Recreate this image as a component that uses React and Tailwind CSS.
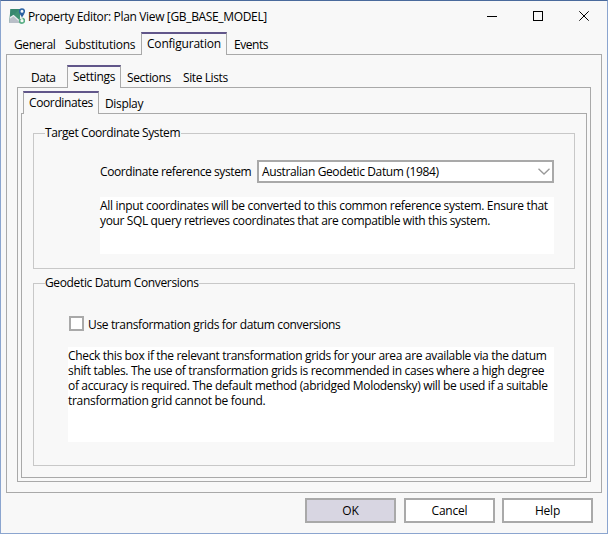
import React, { useState } from 'react';

const MAIN_TABS = [
  { name: 'General', className: 'w-[51px] pl-[8px] tracking-[-0.4px]' },
  { name: 'Substitutions', className: 'w-[84px] pl-[8px] tracking-[-0.25px]' },
  { name: 'Configuration', className: 'w-[86px] pl-[6px] tracking-[-0.2px]' },
  { name: 'Events', className: 'w-[50px] pl-[7px] tracking-[-0.45px]' }
];

const CONFIG_TABS = [
  { name: 'Data', className: 'w-[44px] pl-[8px] tracking-[-0.5px]' },
  { name: 'Settings', className: 'w-[54px] pl-[6px] tracking-[-0.3px]' },
  { name: 'Sections', className: 'w-[56px] pl-[6px] tracking-[-0.35px]' },
  { name: 'Site Lists', className: 'w-[60px] pl-[6px] tracking-[-0.4px]' }
];

const SETTINGS_TABS = [
  { name: 'Coordinates', className: 'w-[76px] pl-[6px] tracking-[-0.38px]' },
  { name: 'Display', className: 'w-[54px] pl-[6px] tracking-[-0.35px]' }
];

function TabBar({ tabs, active, onSelect, className }) {
  return (
    <div role="tablist" className={`relative z-10 flex ${className}`}>
      {tabs.map((tab) => (
        <button
          key={tab.name}
          type="button"
          role="tab"
          aria-selected={tab.name === active}
          onClick={() => onSelect(tab.name)}
          className={`h-[23px] text-left whitespace-nowrap ${tab.className} ${
            tab.name === active
              ? 'border-x border-t-2 border-x-[#a9a9a9] border-t-[#61568a] bg-[#f8f8f8] pb-[2px] -indent-px'
              : 'pt-[1px]'
          }`}
        >
          {tab.name}
        </button>
      ))}
    </div>
  );
}

function AppIcon() {
  return (
    <svg width="16" height="16" viewBox="0 0 16 16">
      <path d="M1.5 1H11V12L13 15H0Z" fill="#3f9173" />
      <path d="M1.5 1H10L4 8L1 9Z" fill="#37876f" />
      <path d="M0.7 9L4 7.5L11 13V15H0Z" fill="#b9bfc8" />
      <path d="M1 10L4.5 7.5L11 13.5" stroke="#e9edf0" strokeWidth="1.2" fill="none" />
      <path d="M10.5 5.5L13 9.5L15.5 5.5Z" fill="#2b5f9e" />
      <circle cx="13" cy="3.3" r="2.3" fill="#f4f8fc" stroke="#2b62a3" strokeWidth="1.6" />
      <circle cx="13" cy="12.7" r="2.4" fill="#f8f8f8" stroke="#58ad83" strokeWidth="1.6" />
      <path d="M11 10.2H13.5" stroke="#f8f8f8" strokeWidth="1.2" />
    </svg>
  );
}

function TitleBar() {
  return (
    <div className="flex h-[30px] items-center pl-2">
      <AppIcon />
      <span className="ml-[3px] flex-1 pt-px tracking-[-0.345px]">Property Editor: Plan View [GB_BASE_MODEL]</span>
      <div className="flex pr-[17px]">
        <button type="button" aria-label="Minimize" className="mr-[35px]">
          <svg width="11" height="11" shapeRendering="crispEdges">
            <path d="M0 5.5H10" stroke="#000" />
          </svg>
        </button>
        <button type="button" aria-label="Maximize" className="mr-[35px]">
          <svg width="11" height="11" shapeRendering="crispEdges">
            <rect x="0.5" y="0.5" width="9" height="9" fill="none" stroke="#000" />
          </svg>
        </button>
        <button type="button" aria-label="Close">
          <svg width="11" height="11">
            <path d="M0.3 0.3L9.7 9.7M9.7 0.3L0.3 9.7" stroke="#000" />
          </svg>
        </button>
      </div>
    </div>
  );
}

function Group({ title, titleClass, className, children }) {
  return (
    <section className={`border border-[#c8c8c8] ${className}`}>
      <h2 className={`-mt-[9px] ml-[11px] h-[16px] bg-[#f8f8f8] leading-[16px] whitespace-nowrap ${titleClass}`}>
        {title}
      </h2>
      {children}
    </section>
  );
}

function DialogButton({ children, className }) {
  return (
    <button type="button" className={`h-[25px] w-[91px] border-2 border-[#a9a9a9] tracking-[-0.2px] ${className}`}>
      {children}
    </button>
  );
}

function App() {
  const [mainTab, setMainTab] = useState('Configuration');
  const [configTab, setConfigTab] = useState('Settings');
  const [settingsTab, setSettingsTab] = useState('Coordinates');
  const [useGrids, setUseGrids] = useState(false);

  return (
    <div className="h-[534px] w-[608px] overflow-hidden border border-[#8ba5cf] border-t-[#4a6a9c] bg-[#f8f8f8] font-['Open_Sans',sans-serif] text-[12px] leading-[15px] text-black">
      <TitleBar />

      <TabBar tabs={MAIN_TABS} active={mainTab} onSelect={setMainTab} className="mt-px ml-[5px]" />
      <div className="-mt-px ml-[5px] h-[439px] w-[596px] border border-[#a9a9a9] px-[10px] pt-[10px]">
        <TabBar tabs={CONFIG_TABS} active={configTab} onSelect={setConfigTab} className="ml-[6px]" />
        <div className="-mt-px h-[395px] w-[574px] border border-[#a9a9a9] px-[3px] pt-[3px]">
          <TabBar tabs={SETTINGS_TABS} active={settingsTab} onSelect={setSettingsTab} className="ml-[2px]" />
          <div className="-mt-px h-[365px] w-[566px] border border-[#a9a9a9] pt-[19px] pl-[11px]">
            <Group title="Target Coordinate System" titleClass="w-[136px] tracking-[-0.4px]" className="h-[136px] w-[542px]">
              <div className="mt-[19px] ml-[66px] flex items-center">
                <label htmlFor="crs" className="w-[157px] whitespace-nowrap tracking-[-0.4px]">
                  Coordinate reference system
                </label>
                <button
                  id="crs"
                  type="button"
                  className="flex h-[23px] w-[297px] items-center justify-between border-2 border-[#a9a9a9] bg-white pr-[2px] pl-[3px]"
                >
                  <span className="tracking-[-0.37px]">Australian Geodetic Datum (1984)</span>
                  <svg width="12" height="7" fill="none" stroke="#999" strokeWidth="1.3">
                    <path d="M0.5 0.7L6 6L11.5 0.7" />
                  </svg>
                </button>
              </div>
              <div className="mt-[14px] ml-[66px] h-[57px] w-[454px] bg-white pt-px whitespace-nowrap">
                <p className="tracking-[-0.325px]">
                  All input coordinates will be converted to this common reference system. Ensure that
                </p>
                <p className="tracking-[-0.365px]">
                  your SQL query retrieves coordinates that are compatible with this system.
                </p>
              </div>
            </Group>

            <Group title="Geodetic Datum Conversions" titleClass="w-[154px] tracking-[-0.36px]" className="mt-[14px] h-[183px] w-[542px]">
              <label className="mt-[25px] ml-[35px] flex h-[15px] items-center">
                <input
                  type="checkbox"
                  checked={useGrids}
                  onChange={(e) => setUseGrids(e.target.checked)}
                  className="size-[15px] appearance-none border-2 border-[#a9a9a9] bg-white checked:bg-[#61568a]"
                />
                <span className="ml-[4px] pt-px tracking-[-0.36px]">Use transformation grids for datum conversions</span>
              </label>
              <div className="mt-[16px] ml-[34px] h-[95px] w-[486px] bg-white pt-px whitespace-nowrap">
                <p className="tracking-[-0.34px]">
                  Check this box if the relevant transformation grids for your area are available via the datum
                </p>
                <p className="tracking-[-0.335px]">
                  shift tables. The use of transformation grids is recommended in cases where a high degree
                </p>
                <p className="tracking-[-0.335px]">
                  of accuracy is required. The default method (abridged Molodensky) will be used if a suitable
                </p>
                <p className="tracking-[-0.3px]">transformation grid cannot be found.</p>
              </div>
            </Group>
          </div>
        </div>
      </div>

      <div className="mt-[5px] ml-[304px] flex">
        <DialogButton className="bg-[#d8d6e2]">OK</DialogButton>
        <DialogButton className="ml-[8px] bg-white">Cancel</DialogButton>
        <DialogButton className="ml-[7px] bg-white">Help</DialogButton>
      </div>
    </div>
  );
}

export default App;
